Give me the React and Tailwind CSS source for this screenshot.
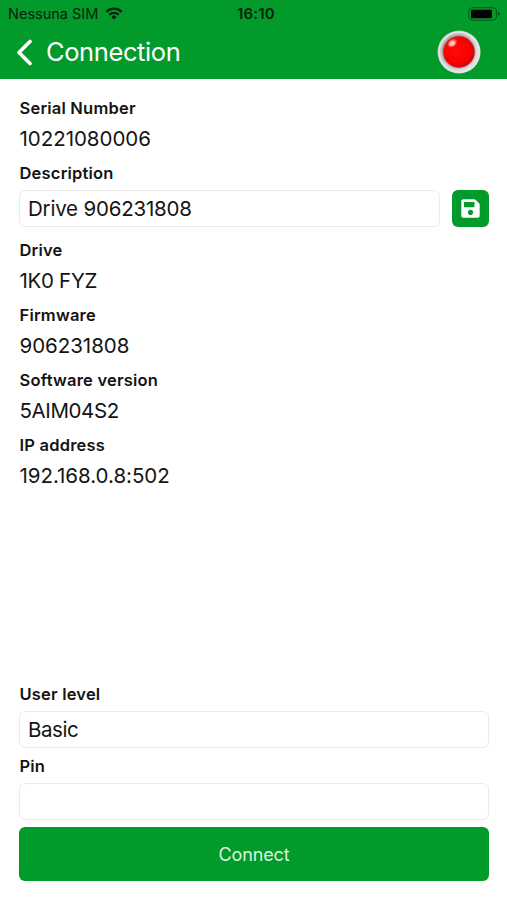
import React, { useState } from "react";
import { FaSave } from "react-icons/fa";

const details = [
  { label: "Drive", value: "1K0 FYZ", tracking: "tracking-[-0.3px]" },
  { label: "Firmware", value: "906231808" },
  { label: "Software version", value: "5AIM04S2", tracking: "tracking-[-0.4px]" },
  { label: "IP address", value: "192.168.0.8:502" },
];

function StatusBar() {
  return (
    <div className="grid grid-cols-3 items-center h-[27px] pl-2 pr-[6px] text-[#04240b]">
      <div className="flex items-center gap-[7px]">
        <span className="text-[14.5px] leading-5 whitespace-nowrap">Nessuna SIM</span>
        <svg width="18" height="13" viewBox="0 0 18 13" fill="none" className="shrink-0">
          <path d="M1.4 4.8a10.8 10.8 0 0 1 15.2 0" stroke="currentColor" strokeWidth="2.4" />
          <path d="M4.3 7.8a6.7 6.7 0 0 1 9.4 0" stroke="currentColor" strokeWidth="2.2" />
          <path d="M9 12.6 6.4 9.9a3.7 3.7 0 0 1 5.2 0Z" fill="currentColor" />
        </svg>
      </div>
      <span className="text-center text-[15px] leading-5 font-semibold tracking-[0.2px] pl-[3px]">16:10</span>
      <svg width="33" height="14" viewBox="0 0 33 14" className="justify-self-end">
        <rect x="1" y="0.8" width="27.5" height="12.4" rx="3.6" fill="none" stroke="#045a18" strokeWidth="1.1" />
        <rect x="3" y="2.8" width="21" height="8.4" rx="1.2" fill="#000" />
        <path d="M30 5v4c1-.4 1.8-1.1 1.8-2S31 5.4 30 5Z" fill="#045a18" />
      </svg>
    </div>
  );
}

function StatusLed() {
  return (
    <svg width="44" height="44" viewBox="0 0 44 44" className="mb-px">
      <defs>
        <linearGradient id="ring" x1="0" y1="0" x2="1" y2="1">
          <stop offset="0" stopColor="#a9adaa" />
          <stop offset="0.5" stopColor="#cfd2d0" />
          <stop offset="1" stopColor="#e9eae9" />
        </linearGradient>
        <linearGradient id="bezel" x1="0" y1="0" x2="1" y2="1">
          <stop offset="0" stopColor="#8d8080" />
          <stop offset="1" stopColor="#d3cfcf" />
        </linearGradient>
        <radialGradient id="lamp" cx="0.45" cy="0.45" r="0.55">
          <stop offset="0" stopColor="#ff0a08" />
          <stop offset="0.75" stopColor="#fb0000" />
          <stop offset="1" stopColor="#c90808" />
        </radialGradient>
        <radialGradient id="glare">
          <stop offset="0" stopColor="#ffe4e0" />
          <stop offset="0.5" stopColor="#ffb3ab" />
          <stop offset="1" stopColor="#ff3a30" stopOpacity="0.3" />
        </radialGradient>
      </defs>
      <circle cx="22" cy="22" r="21.5" fill="url(#ring)" />
      <circle cx="22" cy="22" r="19.8" fill="none" stroke="#e4e6e5" strokeWidth="1.8" />
      <circle cx="22" cy="22" r="17" fill="url(#bezel)" />
      <circle cx="22" cy="22" r="15.7" fill="url(#lamp)" />
      <ellipse cx="15.3" cy="13.2" rx="5.5" ry="4" transform="rotate(-35 15.3 13.2)" fill="url(#glare)" />
    </svg>
  );
}

function Label({ children }) {
  return (
    <div className="h-[30px] pl-[0.5px] text-[16.5px] leading-[30px] font-semibold tracking-[0.2px]">{children}</div>
  );
}

function Detail({ label, value, tracking = "tracking-[-0.03px]" }) {
  return (
    <div className="h-[65px]">
      <Label>{label}</Label>
      <div className={`pl-[0.5px] text-[20.5px] leading-8 ${tracking}`}>{value}</div>
    </div>
  );
}

export default function App() {
  const [description, setDescription] = useState("Drive 906231808");
  const [pin, setPin] = useState("");

  return (
    <div className="flex flex-col h-[900px] bg-white text-[#141414] font-['Inter','Liberation_Sans',sans-serif]">
      {/* Header */}
      <header className="h-[79px] bg-[#039a2c]">
        <StatusBar />
        <div className="flex items-center h-[50px] pl-4 pr-[26px] text-white">
          <svg width="17" height="27" viewBox="0 0 17 27" fill="none">
            <path d="M14 2.5 3 13.5 14 24.5" stroke="currentColor" strokeWidth="3.6" strokeLinecap="round" strokeLinejoin="round" />
          </svg>
          <h1 className="ml-[13px] flex-1 text-[25.5px] leading-8 tracking-[-0.4px]">Connection</h1>
          <StatusLed />
        </div>
      </header>

      {/* Device details */}
      <main className="flex flex-1 flex-col pl-[19px] pr-[18px] pt-[14px] pb-[19px]">
        <Detail label="Serial Number" value="10221080006" />
        <div className="h-[77px]">
          <Label>Description</Label>
          <div className="flex gap-3 pt-[2px]">
            <input
              type="text"
              value={description}
              onChange={(e) => setDescription(e.target.value)}
              className="h-[37px] min-w-0 flex-1 rounded-md border border-[#ebebeb] px-2 text-[20.5px] tracking-[-0.2px] focus:outline-none"
            />
            <button aria-label="Save" className="flex h-[37px] w-[37px] items-center justify-center rounded-md bg-[#039a2c] text-white">
              <FaSave size={21} />
            </button>
          </div>
        </div>
        {details.map((item) => (
          <Detail key={item.label} {...item} />
        ))}

        {/* Login */}
        <div className="mt-auto">
          <Label>User level</Label>
          <div className="mt-[2px] mb-[3px] h-[37px] rounded-md border border-[#ebebeb] px-2 text-[20.5px] leading-[35px] tracking-[-0.4px]">
            Basic
          </div>
          <Label>Pin</Label>
          <input
            type="password"
            value={pin}
            onChange={(e) => setPin(e.target.value)}
            aria-label="Pin"
            className="mt-[2px] block h-[37px] w-full rounded-md border border-[#ebebeb] px-2 text-[20.5px] focus:outline-none"
          />
          <button className="mt-[7px] block h-[54px] w-full rounded-md bg-[#039a2c] text-[18px] tracking-[-0.1px] text-[#d9f5df]">
            Connect
          </button>
        </div>
      </main>
    </div>
  );
}
